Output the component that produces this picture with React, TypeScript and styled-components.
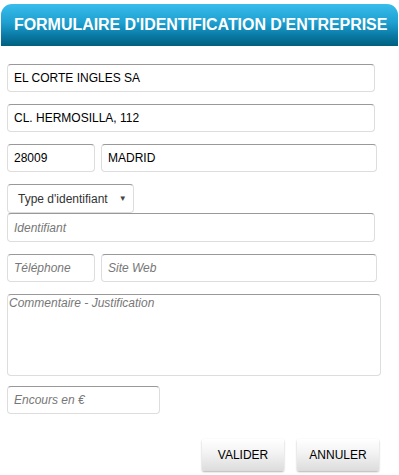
import { FC } from "react";
import styled, { createGlobalStyle } from "styled-components";

const font = `"Liberation Sans", Arial, sans-serif`;

const GlobalStyle = createGlobalStyle`
    body {
        margin: 0;
        background: #fff;
        font-family: ${font};
    }
`;

const Wrapper = styled.div`
    width: 399px;
    height: 475px;
    overflow: hidden;
`;

const Header = styled.div`
    margin: 4px 1px 0 1px;
    height: 42px;
    border-radius: 11px 11px 0 0;
    background: linear-gradient(to bottom, #38bdec 0%, #1d9fd0 45%, #0a7aa5 75%, #00607f 100%);
    display: flex;
    align-items: center;
    padding-left: 13px;
    box-sizing: border-box;
    color: #fff;
    font-weight: bold;
    font-size: 16px;
    letter-spacing: -0.05px;
    white-space: nowrap;
`;

const Form = styled.div`
    display: flex;
    flex-direction: column;
    padding: 18px 0 0 7px;
`;

const Row = styled.div<{ $gap?: number }>`
    display: flex;
    gap: 6px;
    margin-bottom: ${p => p.$gap ?? 12}px;
`;

const Field = styled.input<{ $w: number; $h?: number }>`
    width: ${p => p.$w}px;
    height: ${p => p.$h ?? 28}px;
    box-sizing: border-box;
    border: 1px solid #ddd;
    border-top-color: #999;
    border-radius: 4px;
    padding: 0 6px;
    font-family: ${font};
    font-size: 12px;
    color: #000;
    background: #fff;
    outline: none;
    &::placeholder {
        color: #777;
        font-style: italic;
    }
`;

const Comment = styled.textarea`
    width: 374px;
    height: 82px;
    box-sizing: border-box;
    border: 1px solid #ddd;
    border-top-color: #999;
    border-radius: 4px;
    padding: 1px 1px;
    font-family: ${font};
    font-size: 12px;
    resize: none;
    outline: none;
    &::placeholder {
        color: #777;
        font-style: italic;
    }
`;

const Select = styled.div`
    width: 127px;
    height: 29px;
    box-sizing: border-box;
    border: 1px solid #ddd;
    border-top-color: #999;
    border-radius: 4px;
    display: flex;
    align-items: center;
    padding: 0 0 0 10px;
    font-size: 12px;
    color: #333;
    gap: 11px;
    span {
        font-size: 8px;
        color: #444;
    }
`;

const Actions = styled.div`
    display: flex;
    justify-content: flex-end;
    gap: 13px;
    padding-right: 20px;
    margin-top: 25px;
`;

const Button = styled.button`
    width: 82px;
    height: 32px;
    border: none;
    border-radius: 2px;
    background: linear-gradient(to bottom, #ffffff 0%, #f4f4f4 40%, #dcdcdc 100%);
    box-shadow: 0 1px 2px rgba(0, 0, 0, 0.3);
    font-family: ${font};
    font-size: 12px;
    color: #000;
    cursor: pointer;
`;

const App: FC = () => {
    return (
        <Wrapper>
            <GlobalStyle />
            <Header>FORMULAIRE D'IDENTIFICATION D'ENTREPRISE</Header>
            <Form>
                <Row>
                    <Field $w={368} defaultValue="EL CORTE INGLES SA" />
                </Row>
                <Row>
                    <Field $w={368} defaultValue="CL. HERMOSILLA, 112" />
                </Row>
                <Row>
                    <Field $w={88} defaultValue="28009" />
                    <Field $w={276} defaultValue="MADRID" />
                </Row>
                <Row $gap={0}>
                    <Select>
                        Type d'identifiant <span>▼</span>
                    </Select>
                </Row>
                <Row>
                    <Field $w={368} $h={29} placeholder="Identifiant" />
                </Row>
                <Row>
                    <Field $w={88} placeholder="Téléphone" />
                    <Field $w={276} placeholder="Site Web" />
                </Row>
                <Row $gap={10}>
                    <Comment placeholder="Commentaire - Justification" />
                </Row>
                <Row $gap={0}>
                    <Field $w={153} placeholder="Encours en €" />
                </Row>
                <Actions>
                    <Button>VALIDER</Button>
                    <Button>ANNULER</Button>
                </Actions>
            </Form>
        </Wrapper>
    );
};

export default App;
